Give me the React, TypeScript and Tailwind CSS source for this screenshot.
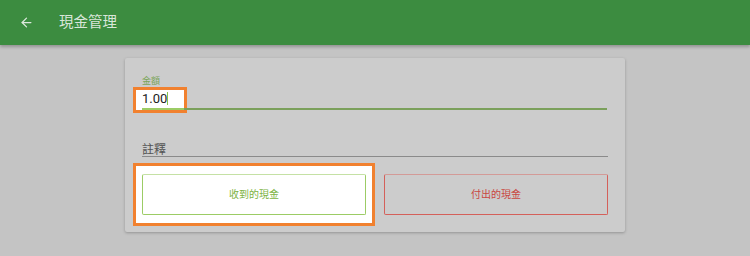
import { ArrowLeft } from 'lucide-react';

const font = { fontFamily: '"Roboto", "Noto Sans CJK TC", sans-serif' };

export default function App() {
  return (
    <div className="w-[750px] h-[256px] bg-[#c4c4c4] overflow-hidden" style={font}>
      {/* App bar */}
      <div className="relative z-10 h-[45px] bg-[#3c8c40] flex items-center shadow-[0_2px_3px_rgba(0,0,0,0.25)]">
        <div className="w-[59px] shrink-0 pl-[19px] flex items-center">
          <ArrowLeft size={15} className="text-[#dde8dd]" strokeWidth={2} />
        </div>
        <span className="text-[14.5px] leading-[16px] text-[#d9e6d9]">現金管理</span>
      </div>

      {/* Card */}
      <div className="ml-[125px] mt-[13px] w-[500px] h-[174px] bg-[#cccccc] rounded-[2px] shadow-[0_1px_3px_rgba(0,0,0,0.25)] px-[17px] pt-[17px]">
        {/* amount field */}
        <div className="relative pr-[1px]">
          <div className="absolute left-[-9px] top-[12px] w-[54px] h-[26px] border-[3px] border-[#f1812f] bg-white" />
          <div className="relative text-[9px] leading-[12px] text-[#7ba55a]">金額</div>
          <div className="relative mt-[4px] flex items-center h-[15px] text-[13px] text-[#222]">
            <span>1.00</span>
            <span className="w-[1px] h-[13px] bg-[#8bc34a]" />
          </div>
          <div className="relative mt-[2px] flex h-[2px]">
            <div className="w-[42px] bg-[#9ccc65]" />
            <div className="flex-1 bg-[#7ba05b]" />
          </div>
        </div>

        {/* note field */}
        <div className="mt-[34px]">
          <div className="text-[12px] leading-[12px] text-[#555]">註釋</div>
          <div className="h-[1px] bg-[#8a8a8a]" />
        </div>

        {/* buttons */}
        <div className="mt-[17px] flex gap-[18px]">
          <div className="relative flex-1">
            <div className="absolute left-[-9px] right-[-9px] top-[-11px] bottom-[-11px] border-[3px] border-[#f1812f] bg-white" />
            <button className="relative w-full h-[41px] border border-[#9ccc65] border-t-[#c5e1a5] rounded-[2px] text-[10px] text-[#7cb342]">
              收到的現金
            </button>
          </div>
          <div className="flex-1">
            <button className="w-full h-[41px] border border-[#d4605a] border-t-[#d39a97] rounded-[2px] text-[10px] text-[#c9473f]">
              付出的現金
            </button>
          </div>
        </div>
      </div>
    </div>
  );
}
